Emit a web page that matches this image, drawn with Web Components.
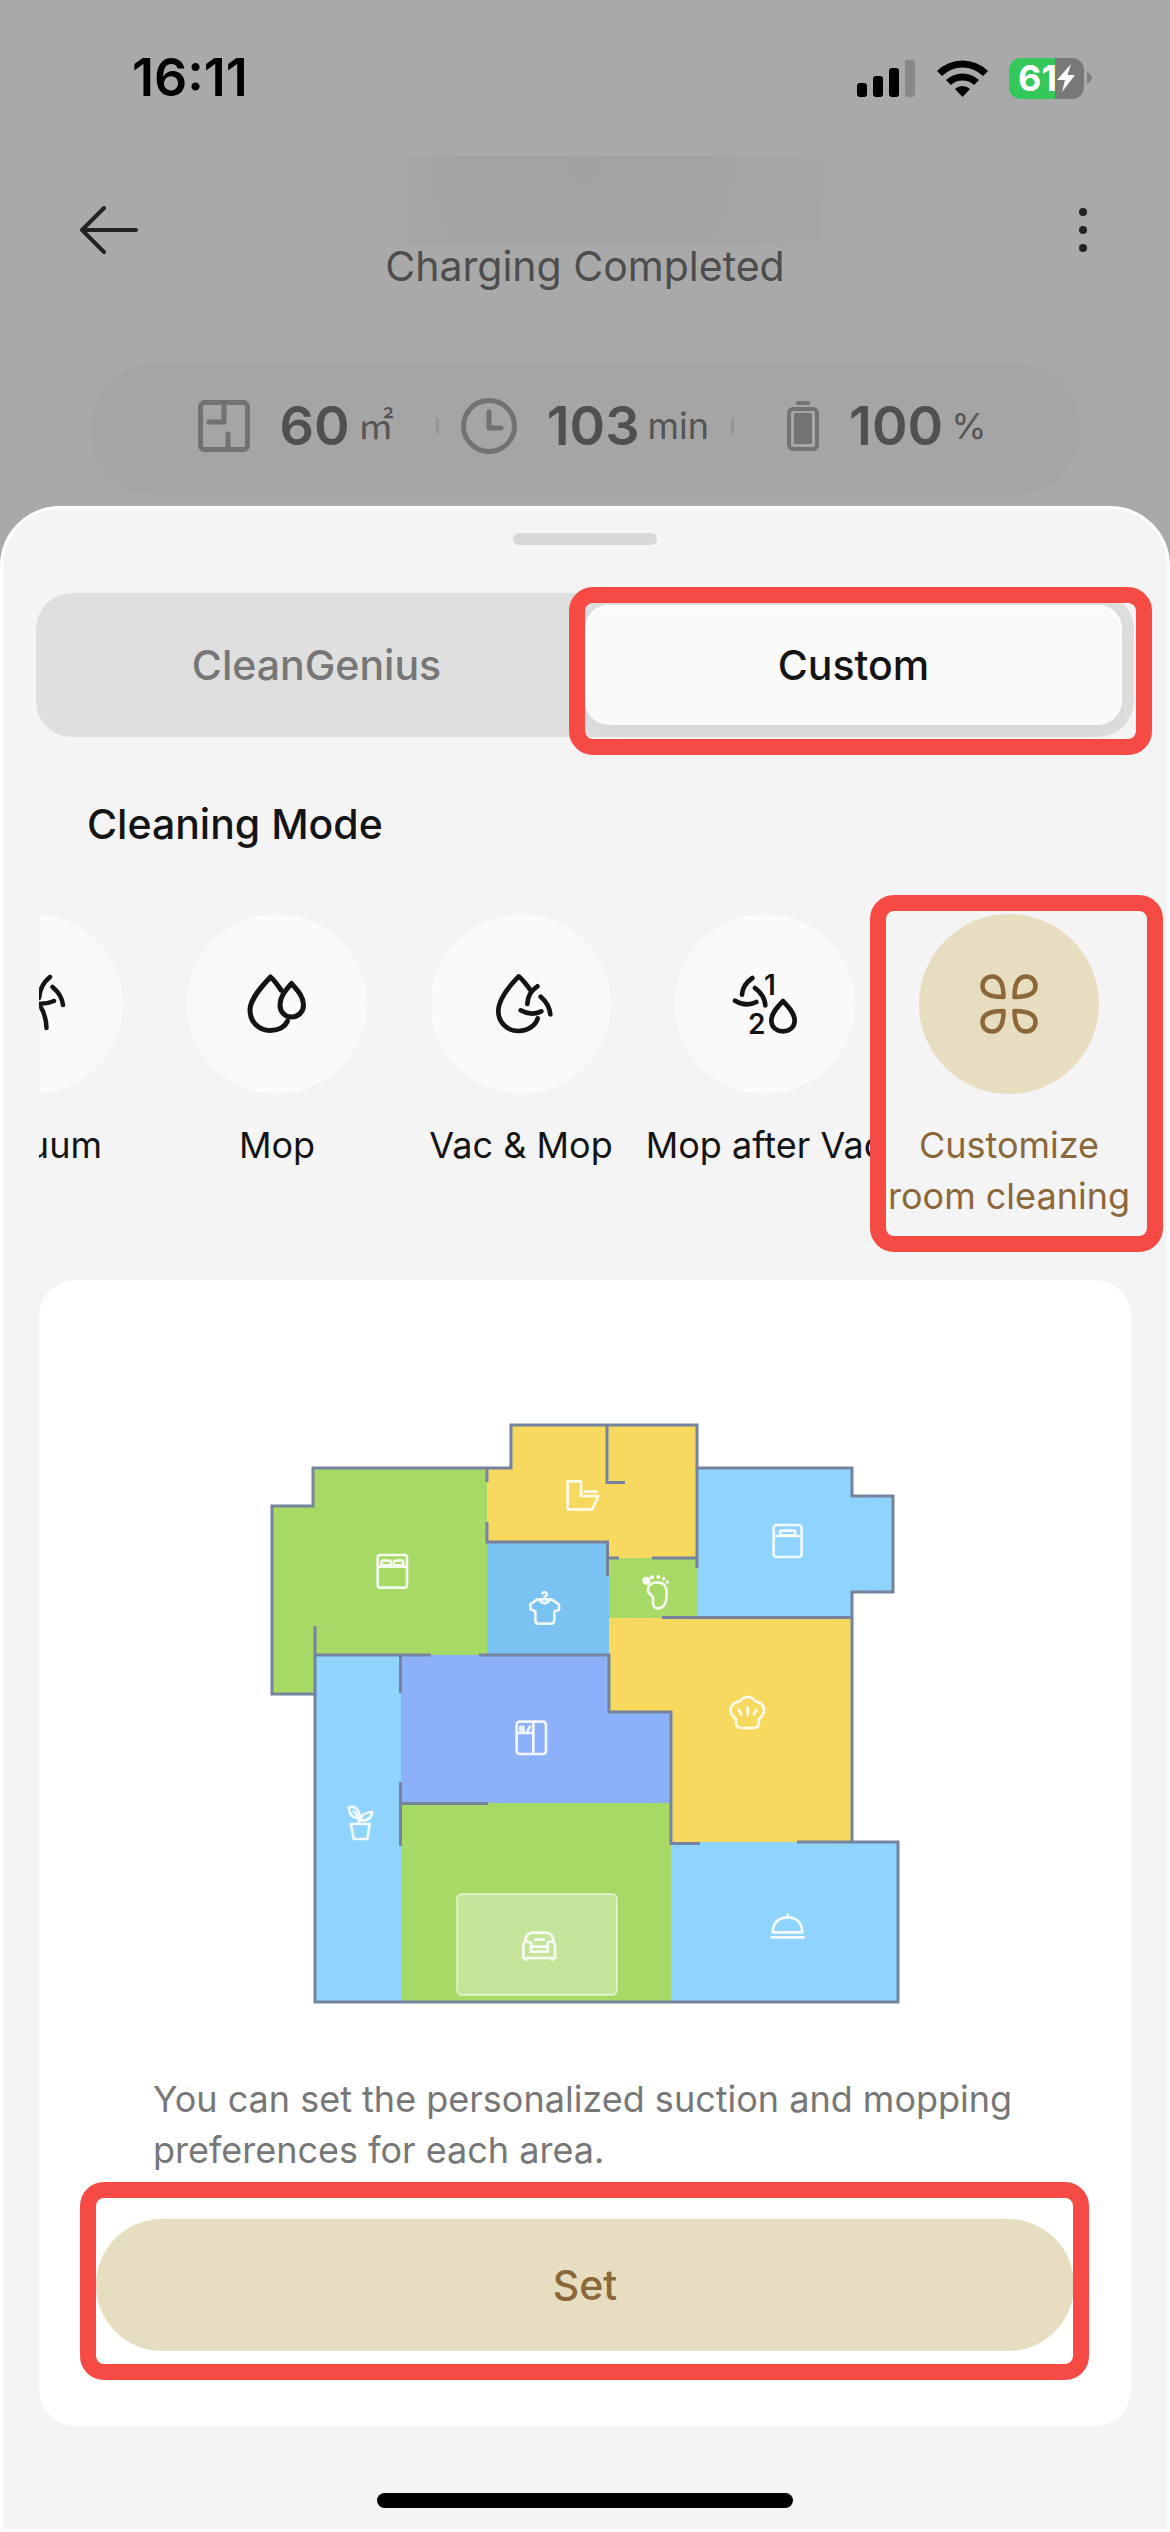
<!DOCTYPE html>
<html lang="en">
<head>
<meta charset="utf-8">
<meta name="viewport" content="width=device-width, initial-scale=1">
<title>Cleaning mode</title>
<style>
  html, body { margin: 0; }
  body { background: #a9a9a9; font-family: Inter, "Liberation Sans", sans-serif; color: #141414; }
</style>
</head>
<body>
<cleaning-app></cleaning-app>

<script>
const define = (name, html, setup) => {
  const template = document.createElement('template');
  template.innerHTML = html;
  customElements.define(name, class extends HTMLElement {
    constructor() {
      super();
      this.attachShadow({ mode: 'open' }).append(template.content.cloneNode(true));
    }
    connectedCallback() { if (setup) setup(this, this.shadowRoot); }
  });
};

/* Phone status bar: clock, signal, wifi, battery */
define('status-bar', `
<style>
  :host { display: flex; align-items: center; justify-content: space-between; height: 156px; padding: 0 78px 0 132px; box-sizing: border-box; color: #000; }
  time { font-size: 52px; font-weight: 600; line-height: 60px; }
  .icons { display: flex; align-items: center; gap: 21px; }
  svg { display: block; }
  .battery { display: flex; align-items: center; gap: 3px; }
  .cell { display: flex; align-items: center; justify-content: center; width: 75px; height: 41px; border-radius: 12px; background: linear-gradient(90deg, #34c759 46px, #787878 46px); color: #fff; font-size: 36px; font-weight: 700; line-height: 40px; }
</style>
<time>16:11</time>
<div class="icons">
  <svg width="59" height="37" viewBox="0 0 59 37" aria-hidden="true">
    <rect x="0" y="23" width="10" height="14" rx="3"/><rect x="16" y="16" width="10" height="21" rx="3"/>
    <rect x="32" y="8" width="10" height="29" rx="3"/><rect x="48" y="0" width="10" height="37" rx="3" fill="#888"/>
  </svg>
  <svg width="51" height="37" viewBox="0 0 51 37" aria-hidden="true">
    <path d="M0 11 A36 36 0 0 1 51 11 L46 16 A29 29 0 0 0 5 16Z"/>
    <path d="M9 20 A24 24 0 0 1 42 20 L37 25 A17 17 0 0 0 14 25Z"/>
    <path d="M18 29 A11 11 0 0 1 33 29 L25.500 37Z"/>
  </svg>
  <div class="battery">
    <div class="cell"><span>61</span>
      <svg width="18" height="28" viewBox="0 0 18 28" aria-hidden="true"><path d="M14 0 L0 16 H8 L5 28 L18 11 H10.500Z" fill="#fff"/></svg>
    </div>
    <svg width="5" height="12" viewBox="0 0 5 12" aria-hidden="true"><path d="M0 0 Q5 3 5 6 Q5 9 0 12Z" fill="#808080"/></svg>
  </div>
</div>`);

/* Device page header: back, name, state, menu */
define('device-header', `
<style>
  :host { display: grid; grid-template-columns: 1fr auto 1fr; align-items: center; height: 148px; padding: 0 77px; }
  button { display: grid; place-items: center; width: 64px; height: 64px; padding: 0; border: 0; background: none; color: #222; }
  button.menu { width: 20px; justify-self: end; }
  .title { align-self: start; display: flex; flex-direction: column; align-items: center; }
  .name { width: 414px; height: 89px; margin: 0 -31px 0 31px; background: radial-gradient(circle at 42% 10%, #a2a2a2, #a5a5a5 70%, #a7a7a7); }
  p { margin: 0; font-size: 41px; line-height: 42px; color: #4d4d4d; }
</style>
<button type="button" aria-label="Back">
  <svg width="58" height="50" viewBox="0 0 58 50" fill="none" stroke="currentColor" stroke-width="4" stroke-linecap="round" stroke-linejoin="round"><path d="M24 3 L2 25 L24 47 M2 25 H56"/></svg>
</button>
<div class="title"><div class="name"></div><p>Charging Completed</p></div>
<button class="menu" type="button" aria-label="More">
  <svg width="10" height="46" viewBox="0 0 10 46" fill="currentColor"><circle cx="5" cy="5" r="4"/><circle cx="5" cy="23" r="4"/><circle cx="5" cy="41" r="4"/></svg>
</button>`);

/* One figure of the run: icon slot, value, unit */
define('run-stat', `
<style>
  :host { display: flex; align-items: center; gap: 30px; }
  .figure { display: flex; align-items: center; gap: 8px; line-height: 60px; }
  .value { font-size: 54px; font-weight: 600; color: #505050; }
  .unit { font-size: 36px; color: #555; font-family: Inter, "Noto Sans CJK SC", sans-serif; }
</style>
<slot name="icon"></slot>
<div class="figure"><span class="value"><slot></slot></span><span class="unit"></span></div>`,
(host, root) => { root.querySelector('.unit').textContent = host.getAttribute('unit'); });

define('run-stats', `
<style>
  :host { display: flex; align-items: center; justify-content: center; height: 132px; margin: 59px 90px 0; padding: 0 0 6px 14px; box-sizing: border-box; border-radius: 66px; background: #a5a5a5; }
  i { width: 3px; height: 16px; background: #949494; border-radius: 1px; }
  svg { display: block; fill: none; stroke: #707273; stroke-width: 5; stroke-linecap: round; stroke-linejoin: round; }
  .area { padding-right: 42px; } .time { padding: 0 22px; } .charge { padding-left: 53px; }
</style>
<run-stat class="area" unit="㎡">60
  <svg slot="icon" width="52" height="52" viewBox="0 0 52 52"><rect x="2.500" y="2.500" width="47" height="47" rx="4"/><path d="M26 4 V22 H11 M30 34 V48"/></svg>
</run-stat>
<i></i>
<run-stat class="time" unit="min">103
  <svg slot="icon" width="56" height="56" viewBox="0 0 56 56"><circle cx="28" cy="28" r="25.500"/><path d="M28 14 V30 H40"/></svg>
</run-stat>
<i></i>
<run-stat class="charge" unit="%">100
  <svg slot="icon" width="32" height="50" viewBox="0 0 32 50"><rect x="2" y="8" width="28" height="40" rx="4" stroke-width="4"/><rect x="7" y="12" width="18" height="31" rx="2" fill="#707273" stroke="none"/><rect x="9" y="0" width="14" height="4" rx="2" fill="#707273" stroke="none"/></svg>
</run-stat>`);

/* Red highlight drawn round whatever is slotted in */
define('mark-frame', `
<style>
  :host { display: block; position: relative; }
  .frame { position: absolute; inset: var(--frame-inset, -16px); border: 16px solid #f64a45; border-radius: 24px; pointer-events: none; z-index: 1; }
</style>
<slot></slot><div class="frame"></div>`);

define('mode-tabs', `
<style>
  :host { display: grid; grid-template-columns: 1fr 1fr; height: 144px; padding: 12px; box-sizing: border-box; border-radius: 36px; background: #dfdfdf; }
  button { display: block; width: 100%; height: 120px; padding: 0; border: 0; border-radius: 24px; background: none; font: 500 41px/48px Inter, sans-serif; color: #767676; }
  button[aria-selected="true"] { background: #fafafa; color: #141414; box-shadow: inset 0 3px 2px #fff, 0 6px 18px rgba(60, 60, 80, .06); }
  mark-frame { --frame-inset: -18px -30px -30px -16px; }
</style>
<button type="button" role="tab" aria-selected="false">CleanGenius</button>
<mark-frame><button type="button" role="tab" aria-selected="true">Custom</button></mark-frame>`,
host => host.setAttribute('role', 'tablist'));

define('mode-option', `
<style>
  :host { display: block; flex: none; width: 244px; }
  button { display: flex; flex-direction: column; align-items: center; gap: 26px; width: 100%; padding: 0; border: 0; background: none; font: 400 36px/51px Inter, sans-serif; color: #141414; }
  .disc { display: grid; place-items: center; width: 180px; height: 180px; border-radius: 50%; background: #fafafa; }
  :host([selected]) button { color: #8b673a; }
  :host([selected]) .disc { background: #e7dec2; }
</style>
<button type="button"><span class="disc"><slot name="icon"></slot></span><span><slot></slot></span></button>`);

define('mode-picker', `
<style>
  :host { display: flex; align-items: flex-start; }
  .strip { flex: 1; min-width: 0; display: flex; justify-content: flex-end; overflow: hidden; }
  mark-frame { flex: none; height: 306px; --frame-inset: -19px -32px -32px -17px; }
  svg { display: block; width: 80px; height: 80px; fill: none; stroke: currentColor; stroke-linecap: round; stroke-linejoin: round; }
  text { fill: currentColor; stroke: none; font: 600 84px Inter, sans-serif; }
</style>
<div class="strip">
  <mode-option>Vacuum
    <svg slot="icon" viewBox="-40 -40 80 80" stroke-width="4.500"><path d="M17 -27 Q7 -19 6 -6 M19.500 -17 Q29 -9 30 1 M21 -3 Q7 3 -8 -4 M6 0 Q13 10 13.500 24 M-27 -15 Q-10 -24 0 -20 M-29 10 Q-22 22 -6 26"/></svg>
  </mode-option>
  <mode-option>Mop
    <svg slot="icon" viewBox="-40 -40 80 80" stroke-width="5"><path d="M4 -14 Q-2 -23 -6.500 -27 C-15 -18 -27 -5 -27 6 C-27 18 -18 26.500 -7 26.500 C1 26.500 8 23 10.500 17"/><path d="M14.500 -20.500 C20 -14 26.500 -8 26.500 1 C26.500 8 21 13 14.500 13 C8 13 3 8 3 1 C3 -8 9 -14 14.500 -20.500Z"/></svg>
  </mode-option>
  <mode-option>Vac &amp; Mop
    <svg slot="icon" viewBox="183 42 240 240" stroke-width="14"><path d="M334 124 Q312 93 296 79 C266 110 235 150 235 183 C235 219 263 243 296 243 C324 243 347 226 353 205 M352 109 Q322 130 322 162 M362 140 Q388 162 391 193 M302 181 Q332 199 364 184"/></svg>
  </mode-option>
  <mode-option>Mop after Vac
    <svg slot="icon" viewBox="915 42 240 240" stroke-width="14"><path d="M997 84 Q968 104 966 134 M1005 114 Q1034 136 1036 166 M945 152 Q978 172 1009 156"/><path d="M1089 153 C1104 170 1124 188 1124 212 C1124 231 1109 244 1089 244 C1069 244 1054 231 1054 212 C1054 188 1074 170 1089 153Z"/><text x="1032" y="134">1</text><text x="984" y="251">2</text></svg>
  </mode-option>
</div>
<mark-frame>
  <mode-option selected>Customize room cleaning
    <svg slot="icon" viewBox="-40 -40 80 80" stroke-width="4.500"><path id="p" d="M-5.500 -7 C-5.500 -18 -8 -27.500 -17 -27.500 C-23 -27.500 -26.500 -23 -26.500 -18 C-26.500 -9 -17 -7 -5.500 -7Z"/><use href="#p" transform="scale(-1 1)"/><use href="#p" transform="scale(1 -1)"/><use href="#p" transform="scale(-1 -1)"/></svg>
  </mode-option>
</mark-frame>`);

/* Floor plan; room symbols sit in groups drawn at three times the plan's scale */
define('floor-plan', `
<style>
  :host { display: block; }
  svg { display: block; margin: 0 auto; width: 630px; max-width: 100%; }
  .wall { fill: none; stroke: #75839f; stroke-width: 3; }
  .sym { fill: none; stroke: #fff; stroke-opacity: .88; stroke-width: 8; stroke-linecap: round; stroke-linejoin: round; }
</style>
<svg viewBox="270 1423 630 581" role="img" aria-label="Floor plan">
  <path fill="#a6d965" d="M272 1506H313V1468H487V1655H315V1694H272Z"/>
  <path fill="#f8d95f" d="M511 1425H697V1558H609V1542H487V1468H511Z"/>
  <path fill="#8fd3ff" d="M697 1468H852V1496H893V1592H852V1618H697Z"/>
  <path fill="#7ac2f2" d="M487 1542H609V1655H487Z"/>
  <path fill="#a6d965" d="M609 1558H697V1618H609Z"/>
  <path fill="#f8d95f" d="M609 1618H852V1842H671V1712H609Z"/>
  <path fill="#8db1f9" d="M401 1655H609V1712H671V1803H401Z"/>
  <path fill="#8fd3ff" d="M315 1655H401V2002H315ZM671 1842H898V2002H671Z"/>
  <path fill="#a6d965" d="M401 1803H671V2002H401Z"/>
  <rect x="457" y="1894" width="160" height="101" rx="5" fill="#fff" fill-opacity=".35" stroke="#fff" stroke-opacity=".5" stroke-width="2"/>
  <path class="wall" d="M272 1506H313V1468H511V1425H697V1468H852V1496H893V1592H852V1842H898V2002H315V1694H272Z"/>
  <path class="wall" d="M487 1468V1482M487 1522V1542H607.500V1576M607 1558H619M652 1558H697M697 1468V1568M662 1617.500H852M607 1425V1482.500H625M315 1694V1626M315 1655H431M479 1655H609V1712H671V1843.500H700M797 1842H852M400.500 1655V1693M400.500 1782V1846M401 1803.500H488"/>
  <g class="sym" transform="translate(250 1400) scale(.33333)">
    <rect x="383" y="465" width="88" height="98" rx="7"/><path d="M385 500H470"/><rect x="394" y="482" width="29" height="14" rx="6"/><rect x="431" y="482" width="29" height="14" rx="6"/>
    <path d="M862 598 H904 L927 613 V630 L913 634 V662 Q912 671 903 671 H866 Q857 671 856 662 V634 L841 628 V613Z M868 600 Q884 620 900 600 M877 580 Q884 573 890 580 Q892 586 884 590 V597"/>
    <path d="M953 244 H993 V288 H1045 L1027 328 H953Z M1004 275 H1040"/>
  </g>
  <g class="sym" transform="translate(580 1400) scale(.33333)">
    <rect x="581" y="375" width="84" height="96" rx="9"/><path d="M583 408H664"/><rect x="600" y="392" width="46" height="14" rx="6"/>
    <path d="M204 568 Q206 547 232 547 Q262 547 260 585 Q259 625 234 625 Q216 625 219 598 Q220 588 210 582 Q202 577 204 568Z"/>
    <g fill="#fff" stroke="none"><circle cx="199" cy="542" r="12"/><circle cx="216" cy="532" r="6"/><circle cx="235" cy="531" r="6"/><circle cx="251" cy="536" r="5"/><circle cx="262" cy="546" r="5"/></g>
    <path d="M468 957 Q452 945 452 930 Q453 907 480 904 Q488 891 503 891 Q518 891 526 904 Q551 908 552 930 Q552 946 537 957 V970 Q535 984 520 984 H486 Q470 984 468 970Z M476 930 L484 943 M503 922 V943 M529 930 L521 943"/>
  </g>
  <g class="sym" transform="translate(250 1720) scale(.33333)">
    <rect x="800" y="5" width="88" height="97" rx="9"/><path d="M850 6 V101 M802 39 H848 M811 20 V34 M820 20 V34 M840 20 L832 34"/>
    <path d="M303 312 H359 L352 357 H311Z M327 310 Q327 300 324 295 Q297 290 296 262 Q325 254 331 295 M311 274 Q321 281 326 300 M331 298 Q338 277 367 276 Q364 303 331 302"/>
    <path d="M825 665 Q827 638 848 638 H887 Q908 638 911 665 M843 668 Q820 658 820 678 V714 H915 V678 Q914 658 893 668 V695 H843Z M845 680 H891 M855 659 H881 M827 716 V720 M907 716 V720"/>
  </g>
  <g class="sym" transform="translate(580 1720) scale(.33333)">
    <path d="M575 652 H671 M578 637 Q580 593 623 592 Q665 593 667 637Z M623 590 V583"/>
  </g>
</svg>`);

define('room-card', `
<style>
  :host { display: block; padding: 143px 57px 75px; border-radius: 36px; background: #fff; }
  p { margin: 70px 57px 43px; font-size: 36px; line-height: 51px; color: #777; }
  mark-frame { --frame-inset: -37px -15px -29px -16px; }
  button { display: block; width: 100%; height: 132px; padding: 0; border: 0; border-radius: 66px; background: #e7dec2; font: 500 41px/48px Inter, sans-serif; color: #8b673a; }
</style>
<floor-plan></floor-plan>
<p>You can set the personalized suction and mopping preferences for each area.</p>
<mark-frame><button type="button">Set</button></mark-frame>`);

define('bottom-sheet', `
<style>
  :host { display: block; margin-top: 11px; padding: 24px 0 21px; border: 3px solid #fff; border-radius: 60px 60px 0 0; background: #f4f4f4; }
  .handle { width: 144px; height: 12px; margin: 0 auto 48px; border-radius: 6px; background: #d8d8d8; }
  .home { width: 416px; height: 15px; margin: 67px auto 0; border-radius: 8px; background: #000; }
</style>
<div class="handle"></div><slot></slot><div class="home"></div>`);

define('cleaning-app', `
<style>
  :host { display: block; }
  mode-tabs { margin: 0 33px; }
  h2 { margin: 62px 84px 65px; font-size: 41px; line-height: 50px; font-weight: 500; }
  mode-picker, room-card { margin: 0 36px; }
  room-card { margin-top: 60px; }
</style>
<status-bar></status-bar>
<device-header></device-header>
<run-stats></run-stats>
<bottom-sheet>
  <mode-tabs></mode-tabs>
  <h2>Cleaning Mode</h2>
  <mode-picker></mode-picker>
  <room-card></room-card>
</bottom-sheet>`);
</script>
</body>
</html>
